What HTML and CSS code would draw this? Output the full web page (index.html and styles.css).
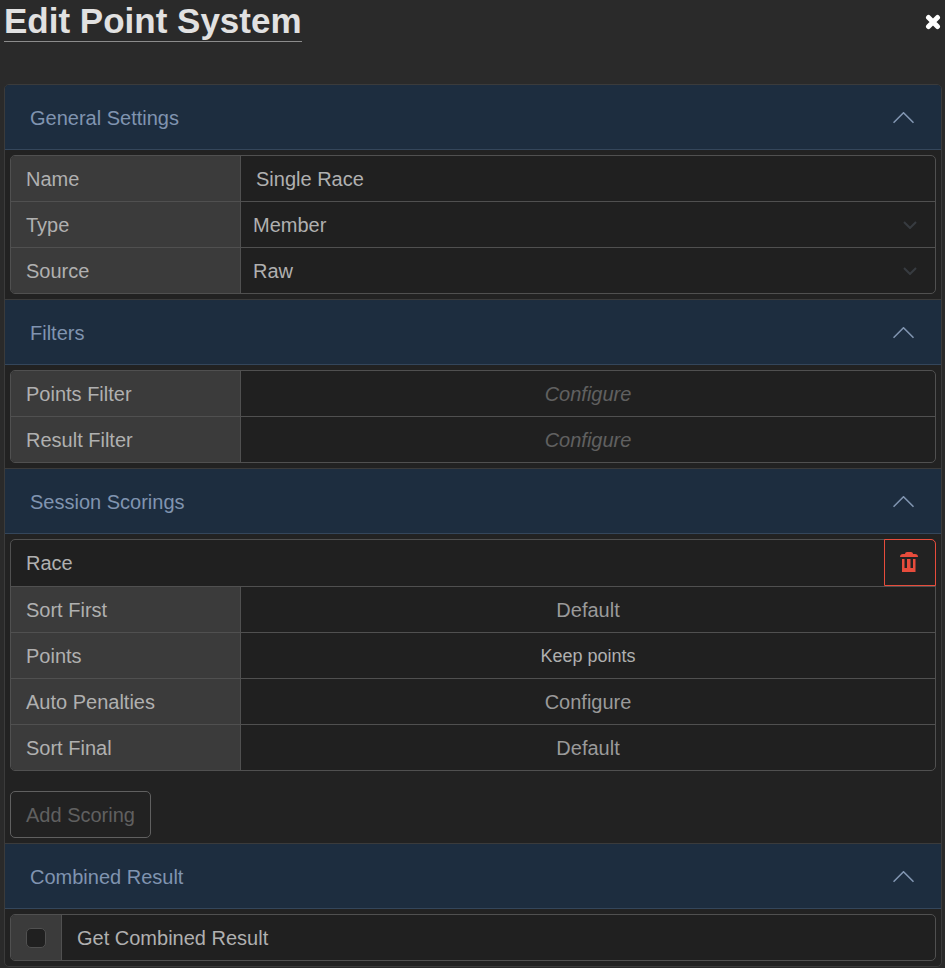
FILE: index.html
```html
<!DOCTYPE html>
<html lang="en">
<head>
<meta charset="utf-8">
<title>Edit Point System</title>
<meta name="viewport" content="width=device-width, initial-scale=1">
<link rel="stylesheet" href="styles.css">
</head>
<body>
<svg class="defs" aria-hidden="true">
  <symbol id="chevron-up" viewBox="0 0 22 12"><path d="M.5 10.800 10.500 .8l10 10" fill="none" stroke="currentColor" stroke-width="1.600"/></symbol>
</svg>
<header class="top">
  <h1 class="title">Edit Point System</h1>
  <button class="close" type="button" aria-label="Close">
    <svg width="16" height="16" viewBox="0 0 16 16"><path d="M3.500 3.500 12.500 12.500M12.500 3.500 3.500 12.500" stroke="currentColor" stroke-width="5" stroke-linecap="round"/></svg>
  </button>
</header>
<main class="accordion">
  <section class="item">
    <h2 class="heading"><button class="toggle" type="button" aria-expanded="true">General Settings<svg class="chevron"><use href="#chevron-up"/></svg></button></h2>
    <div class="body">
      <div class="group">
        <div class="row"><label class="label" for="name">Name</label><input class="field" id="name" type="text" value="Single Race"></div>
        <div class="row"><label class="label" for="type">Type</label><div class="select"><select class="field" id="type"><option>Member</option></select><svg class="caret" viewBox="0 0 14 8"><path d="M1 1l6 6 6-6"/></svg></div></div>
        <div class="row"><label class="label" for="source">Source</label><div class="select"><select class="field" id="source"><option>Raw</option></select><svg class="caret" viewBox="0 0 14 8"><path d="M1 1l6 6 6-6"/></svg></div></div>
      </div>
    </div>
  </section>
  <section class="item">
    <h2 class="heading"><button class="toggle" type="button" aria-expanded="true">Filters<svg class="chevron"><use href="#chevron-up"/></svg></button></h2>
    <div class="body">
      <div class="group">
        <div class="row"><label class="label" for="points-filter">Points Filter</label><button class="field action unset" id="points-filter" type="button">Configure</button></div>
        <div class="row"><label class="label" for="result-filter">Result Filter</label><button class="field action unset" id="result-filter" type="button">Configure</button></div>
      </div>
    </div>
  </section>
  <section class="item">
    <h2 class="heading"><button class="toggle" type="button" aria-expanded="true">Session Scorings<svg class="chevron"><use href="#chevron-up"/></svg></button></h2>
    <div class="body">
      <div class="group scoring">
        <div class="row session"><span class="session-name">Race</span>
          <button class="delete" type="button" aria-label="Delete scoring">
            <svg width="18" height="22" viewBox="0 0 18 22" fill="currentColor"><path d="M0 6C0 4 1 3 3 3h2c0-1.200 1-2 2-2h4c1 0 2 .8 2 2h2c2 0 3 1 3 3z"/><path d="M2 8h2.500V17H7V8h3.500V17H13V8h2.500V21H2z"/><path d="M7.200 8h2.800v10H7.200z"/></svg>
          </button>
        </div>
        <div class="row"><label class="label" for="sort-first">Sort First</label><button class="field action" id="sort-first" type="button">Default</button></div>
        <div class="row"><label class="label" for="points">Points</label><button class="field action points" id="points" type="button">Keep points</button></div>
        <div class="row"><label class="label" for="penalties">Auto Penalties</label><button class="field action" id="penalties" type="button">Configure</button></div>
        <div class="row"><label class="label" for="sort-final">Sort Final</label><button class="field action" id="sort-final" type="button">Default</button></div>
      </div>
      <button class="add" type="button">Add Scoring</button>
    </div>
  </section>
  <section class="item">
    <h2 class="heading"><button class="toggle" type="button" aria-expanded="true">Combined Result<svg class="chevron"><use href="#chevron-up"/></svg></button></h2>
    <div class="body">
      <div class="group">
        <div class="row"><span class="check-cell"><input class="check" id="combined" type="checkbox"></span><label class="check-label" for="combined">Get Combined Result</label></div>
      </div>
    </div>
  </section>
</main>
</body>
</html>
```

FILE: styles.css
```css
* { box-sizing: border-box; }

body {
  margin: 0;
  background: #2a2a2a;
  color: #b0b0b0;
  font: 20px/30px "Liberation Sans", Arial, sans-serif;
}

button, input, select { font: inherit; color: inherit; }
button { cursor: pointer; }

.defs { display: none; }

.top {
  display: flex;
  justify-content: space-between;
  align-items: flex-start;
  padding-left: 4px;
  margin-bottom: 42px;
}

.title {
  margin: 0;
  border-bottom: 1px solid #8c8c8c;
  color: #e1e1e1;
  font-size: 35px;
  font-weight: bold;
  line-height: 41px;
}

.close {
  margin: 14px 4px 0 0;
  padding: 0;
  border: 0;
  background: none;
  color: #fff;
}

.close svg { display: block; }

.accordion {
  margin: 0 3px 0 4px;
  border: 1px solid #3b3b3b;
  border-radius: 5px;
  background: #222;
  overflow: hidden;
}

.item + .item { border-top: 1px solid #3b3b3b; }

.heading { margin: 0; font-size: 20px; font-weight: normal; }

.toggle {
  display: flex;
  align-items: center;
  justify-content: space-between;
  width: 100%;
  height: 65px;
  padding: 2px 26px 0 25px;
  border: 0;
  border-bottom: 1px solid #34465b;
  background: #1d2d3f;
  color: #8094b0;
  text-align: left;
}

.chevron { width: 22px; height: 12px; }

.body { padding: 5px; }

.group {
  border: 1px solid #505050;
  border-radius: 5px;
  background: #202020;
  overflow: hidden;
}

.row { display: flex; height: 45px; }
.row + .row { height: 46px; border-top: 1px solid #505050; }

.label {
  flex: 0 0 230px;
  padding: 8px 15px;
  border-right: 1px solid #505050;
  background: #3b3b3b;
}

.field {
  flex: 1;
  min-width: 0;
  width: 100%;
  height: 100%;
  padding: 0 15px;
  border: 0;
  background: transparent;
}

input.field { padding-top: 2px; }

.select { position: relative; flex: 1; }
.select .field { padding: 0 12px; appearance: none; }

.caret {
  position: absolute;
  top: 50%;
  right: 18px;
  width: 14px;
  height: 8px;
  margin-top: -4px;
  fill: none;
  stroke: #373b40;
  stroke-width: 2;
  pointer-events: none;
}

.action { color: #9a9a9a; }
.unset { color: #606060; font-style: italic; }
.points { color: #b0b0b0; font-size: 18px; }

.scoring { margin-bottom: 20px; }
.session { justify-content: space-between; height: 46px; }
.session-name { padding: 8px 15px; }

.delete {
  display: flex;
  align-items: center;
  justify-content: center;
  width: 52px;
  margin: -1px -1px 0 0;
  padding: 0 2px 2px 0;
  border: 1px solid #e74c3c;
  border-top-right-radius: 5px;
  background: #222;
  color: #e74c3c;
}

.group.scoring { overflow: visible; }
.scoring .row:last-child .label { border-bottom-left-radius: 4px; }

.add {
  display: block;
  height: 47px;
  padding: 0 15px;
  border: 1px solid #606060;
  border-radius: 5px;
  background: transparent;
  color: #606060;
}

.check-cell {
  display: flex;
  align-items: center;
  padding: 0 15px;
  border-right: 1px solid #505050;
  background: #3b3b3b;
}

.check {
  width: 20px;
  height: 20px;
  margin: 0;
  border: 1px solid #505050;
  border-radius: 5px;
  background: #202020;
  appearance: none;
}

.check-label { flex: 1; padding: 8px 15px; }
```
